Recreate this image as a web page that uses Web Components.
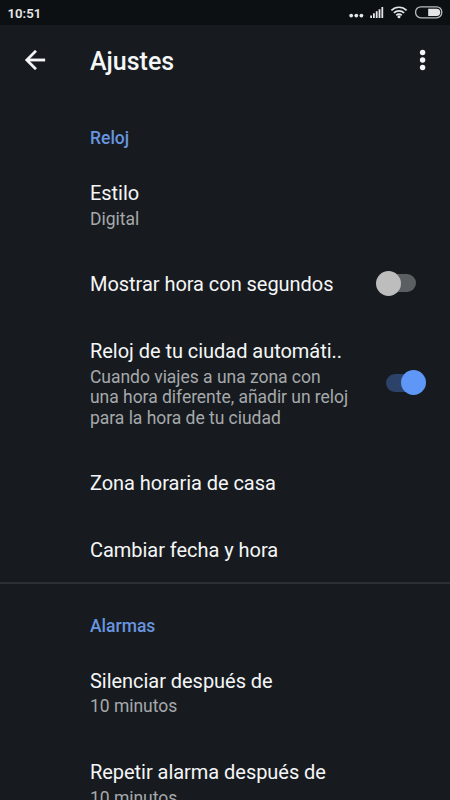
<!DOCTYPE html>
<html lang="es">
<head>
<meta charset="utf-8">
<title>Ajustes</title>
<style>
    body {
        margin: 0;
        height: 800px;
        overflow: hidden;
        background: #171b1f;
        font-family: Roboto, sans-serif;
        --accent: #6895df;
        --text: #f5f6f7;
        --text-secondary: #a6a9ab;
    }
</style>
</head>
<body>
<settings-screen></settings-screen>

<script>
class StatusBar extends HTMLElement {
    constructor() {
        super();
        this.attachShadow({ mode: 'open' });
    }

    connectedCallback() {
        this.shadowRoot.innerHTML = `
            <style>
                :host {
                    display: flex;
                    justify-content: space-between;
                    align-items: center;
                    box-sizing: border-box;
                    height: 25px;
                    padding-left: 7.5px;
                    background: #0c1013;
                    color: #e6e8e9;
                    font-size: 13.2px;
                    font-weight: 600;
                }

                .time {
                    line-height: 25px;
                    padding-top: 1px;
                }

                svg {
                    display: block;
                }
            </style>
            <span class="time">${this.getAttribute('time')}</span>
            <svg width="104" height="25" viewBox="346 0 104 25" fill="#e3e5e6">
                <circle cx="351.2" cy="15.6" r="1.9"/>
                <circle cx="356.3" cy="15.6" r="1.9"/>
                <circle cx="361.4" cy="15.6" r="1.9"/>
                <path d="M370.2 15.4h1.8V18h-1.8zM373 13.3h1.8V18H373zM375.8 11.3h1.8V18h-1.8zM378.6 9.2h1.8V18h-1.8z"/>
                <path d="M381.4 7h1.8v11h-1.8z"/>
                <g fill="none" stroke="#e3e5e6" stroke-width="1.7">
                    <path d="M391.4 10.4a10.7 10.7 0 0 1 15.2 0"/>
                    <path d="M393.9 12.9a7.2 7.2 0 0 1 10.2 0"/>
                    <path d="M396.3 15.3a3.8 3.8 0 0 1 5.4 0"/>
                </g>
                <circle cx="399" cy="16.8" r="1.5"/>
                <rect x="415.6" y="6.8" width="26.2" height="11" rx="5.2" fill="none" stroke="#b9bcbe" stroke-width="1.3"/>
                <path d="M428.2 8.7h8.4a3.6 3.6 0 0 1 0 7.3h-8.4z"/>
            </svg>
        `;
    }
}

class AppBar extends HTMLElement {
    constructor() {
        super();
        this.attachShadow({ mode: 'open' });
    }

    connectedCallback() {
        this.shadowRoot.innerHTML = `
            <style>
                :host {
                    display: flex;
                    align-items: center;
                    box-sizing: border-box;
                    height: 71px;
                    padding: 0 12px 0 20px;
                    color: var(--text);
                }

                h1 {
                    flex: 1;
                    margin: 2px 0 0 40px;
                    font-size: 25px;
                    font-weight: 500;
                    line-height: 30px;
                }

                svg {
                    display: block;
                }

                .back {
                    margin-top: -1px;
                }

                .more {
                    margin-top: -1px;
                }
            </style>
            <svg class="back" width="30" height="30" viewBox="0 0 24 24" fill="#f5f6f7" stroke="#f5f6f7" stroke-width="0.25">
                <path d="M20 11H7.83l5.59-5.59L12 4l-8 8 8 8 1.41-1.41L7.83 13H20v-2z"/>
            </svg>
            <h1><slot></slot></h1>
            <svg class="more" width="30" height="30" viewBox="0 0 30 30" fill="#f5f6f7">
                <circle cx="14.6" cy="7.5" r="2.7"/>
                <circle cx="14.6" cy="15" r="2.7"/>
                <circle cx="14.6" cy="22.5" r="2.7"/>
            </svg>
        `;
    }
}

class SettingsGroup extends HTMLElement {
    constructor() {
        super();
        this.attachShadow({ mode: 'open' });
    }

    connectedCallback() {
        this.shadowRoot.innerHTML = `
            <style>
                :host {
                    display: block;
                }

                :host([divided]) {
                    margin-top: -1px;
                    border-top: 2px solid #2c3033;
                }

                h2 {
                    margin: 0;
                    padding: 32px 0 11.5px 90px;
                    color: var(--accent);
                    font-size: 17.5px;
                    font-weight: 500;
                    line-height: 20.5px;
                }

                :host([divided]) h2 {
                    padding-top: 31.6px;
                }
            </style>
            <h2>${this.getAttribute('label')}</h2>
            <slot></slot>
        `;
    }
}

class ToggleSwitch extends HTMLElement {
    constructor() {
        super();
        this.attachShadow({ mode: 'open' });
    }

    connectedCallback() {
        this.shadowRoot.innerHTML = `
            <style>
                :host {
                    display: flex;
                    align-items: center;
                    width: 50px;
                    height: 25px;
                }

                .track {
                    display: flex;
                    align-items: center;
                    width: 30px;
                    height: 18px;
                    margin: 0 10px;
                    border-radius: 9px;
                    background: #5b5f62;
                }

                .thumb {
                    flex: none;
                    width: 25px;
                    height: 25px;
                    margin-left: -10px;
                    border-radius: 50%;
                    background: #bcbdbc;
                }

                :host([checked]) .track {
                    background: #2d4269;
                }

                :host([checked]) .thumb {
                    margin-left: 15px;
                    background: #5f97f6;
                }
            </style>
            <div class="track"><div class="thumb"></div></div>
        `;
    }
}

class SettingsRow extends HTMLElement {
    constructor() {
        super();
        this.attachShadow({ mode: 'open' });
    }

    connectedCallback() {
        const summary = this.getAttribute('summary');

        this.shadowRoot.innerHTML = `
            <style>
                :host {
                    display: flex;
                    align-items: center;
                    padding: 21.3px 24px 21.3px 90px;
                }

                .text {
                    flex: 1;
                    white-space: nowrap;
                }

                .title {
                    color: var(--text);
                    font-size: 20px;
                    letter-spacing: -0.04px;
                    line-height: 24px;
                }

                .summary {
                    margin: 3.6px 0 0.4px;
                    color: var(--text-secondary);
                    font-size: 17.5px;
                    letter-spacing: -0.03px;
                    line-height: 20.5px;
                    white-space: pre-line;
                }

                ::slotted(toggle-switch) {
                    margin: -2px 0 0;
                }
            </style>
            <div class="text">
                <div class="title">${this.getAttribute('label')}</div>
                ${summary ? `<div class="summary">${summary}</div>` : ''}
            </div>
            <slot></slot>
        `;
    }
}

// --- Settings Data ---
const groups = [
    {
        label: 'Reloj',
        rows: [
            { label: 'Estilo', summary: 'Digital' },
            { label: 'Mostrar hora con segundos', toggle: 'off' },
            {
                label: 'Reloj de tu ciudad automáti..',
                summary: 'Cuando viajes a una zona con\nuna hora diferente, añadir un reloj\npara la hora de tu ciudad',
                toggle: 'on',
            },
            { label: 'Zona horaria de casa' },
            { label: 'Cambiar fecha y hora' },
        ],
    },
    {
        label: 'Alarmas',
        rows: [
            { label: 'Silenciar después de', summary: '10 minutos' },
            { label: 'Repetir alarma después de', summary: '10 minutos' },
        ],
    },
];

class SettingsScreen extends HTMLElement {
    constructor() {
        super();
        this.attachShadow({ mode: 'open' });
    }

    connectedCallback() {
        this.shadowRoot.innerHTML = `
            <style>
                :host {
                    display: block;
                    height: 800px;
                    overflow: hidden;
                }
            </style>
            <status-bar time="10:51"></status-bar>
            <app-bar>Ajustes</app-bar>
        `;

        groups.forEach((group, index) => {
            const groupElement = document.createElement('settings-group');
            groupElement.setAttribute('label', group.label);
            if (index > 0) groupElement.setAttribute('divided', '');

            group.rows.forEach(row => {
                const rowElement = document.createElement('settings-row');
                rowElement.setAttribute('label', row.label);
                if (row.summary) rowElement.setAttribute('summary', row.summary);
                if (row.toggle) {
                    const toggle = document.createElement('toggle-switch');
                    toggle.toggleAttribute('checked', row.toggle === 'on');
                    rowElement.appendChild(toggle);
                }
                groupElement.appendChild(rowElement);
            });

            this.shadowRoot.appendChild(groupElement);
        });
    }
}

customElements.define('status-bar', StatusBar);
customElements.define('app-bar', AppBar);
customElements.define('toggle-switch', ToggleSwitch);
customElements.define('settings-row', SettingsRow);
customElements.define('settings-group', SettingsGroup);
customElements.define('settings-screen', SettingsScreen);
</script>
</body>
</html>
